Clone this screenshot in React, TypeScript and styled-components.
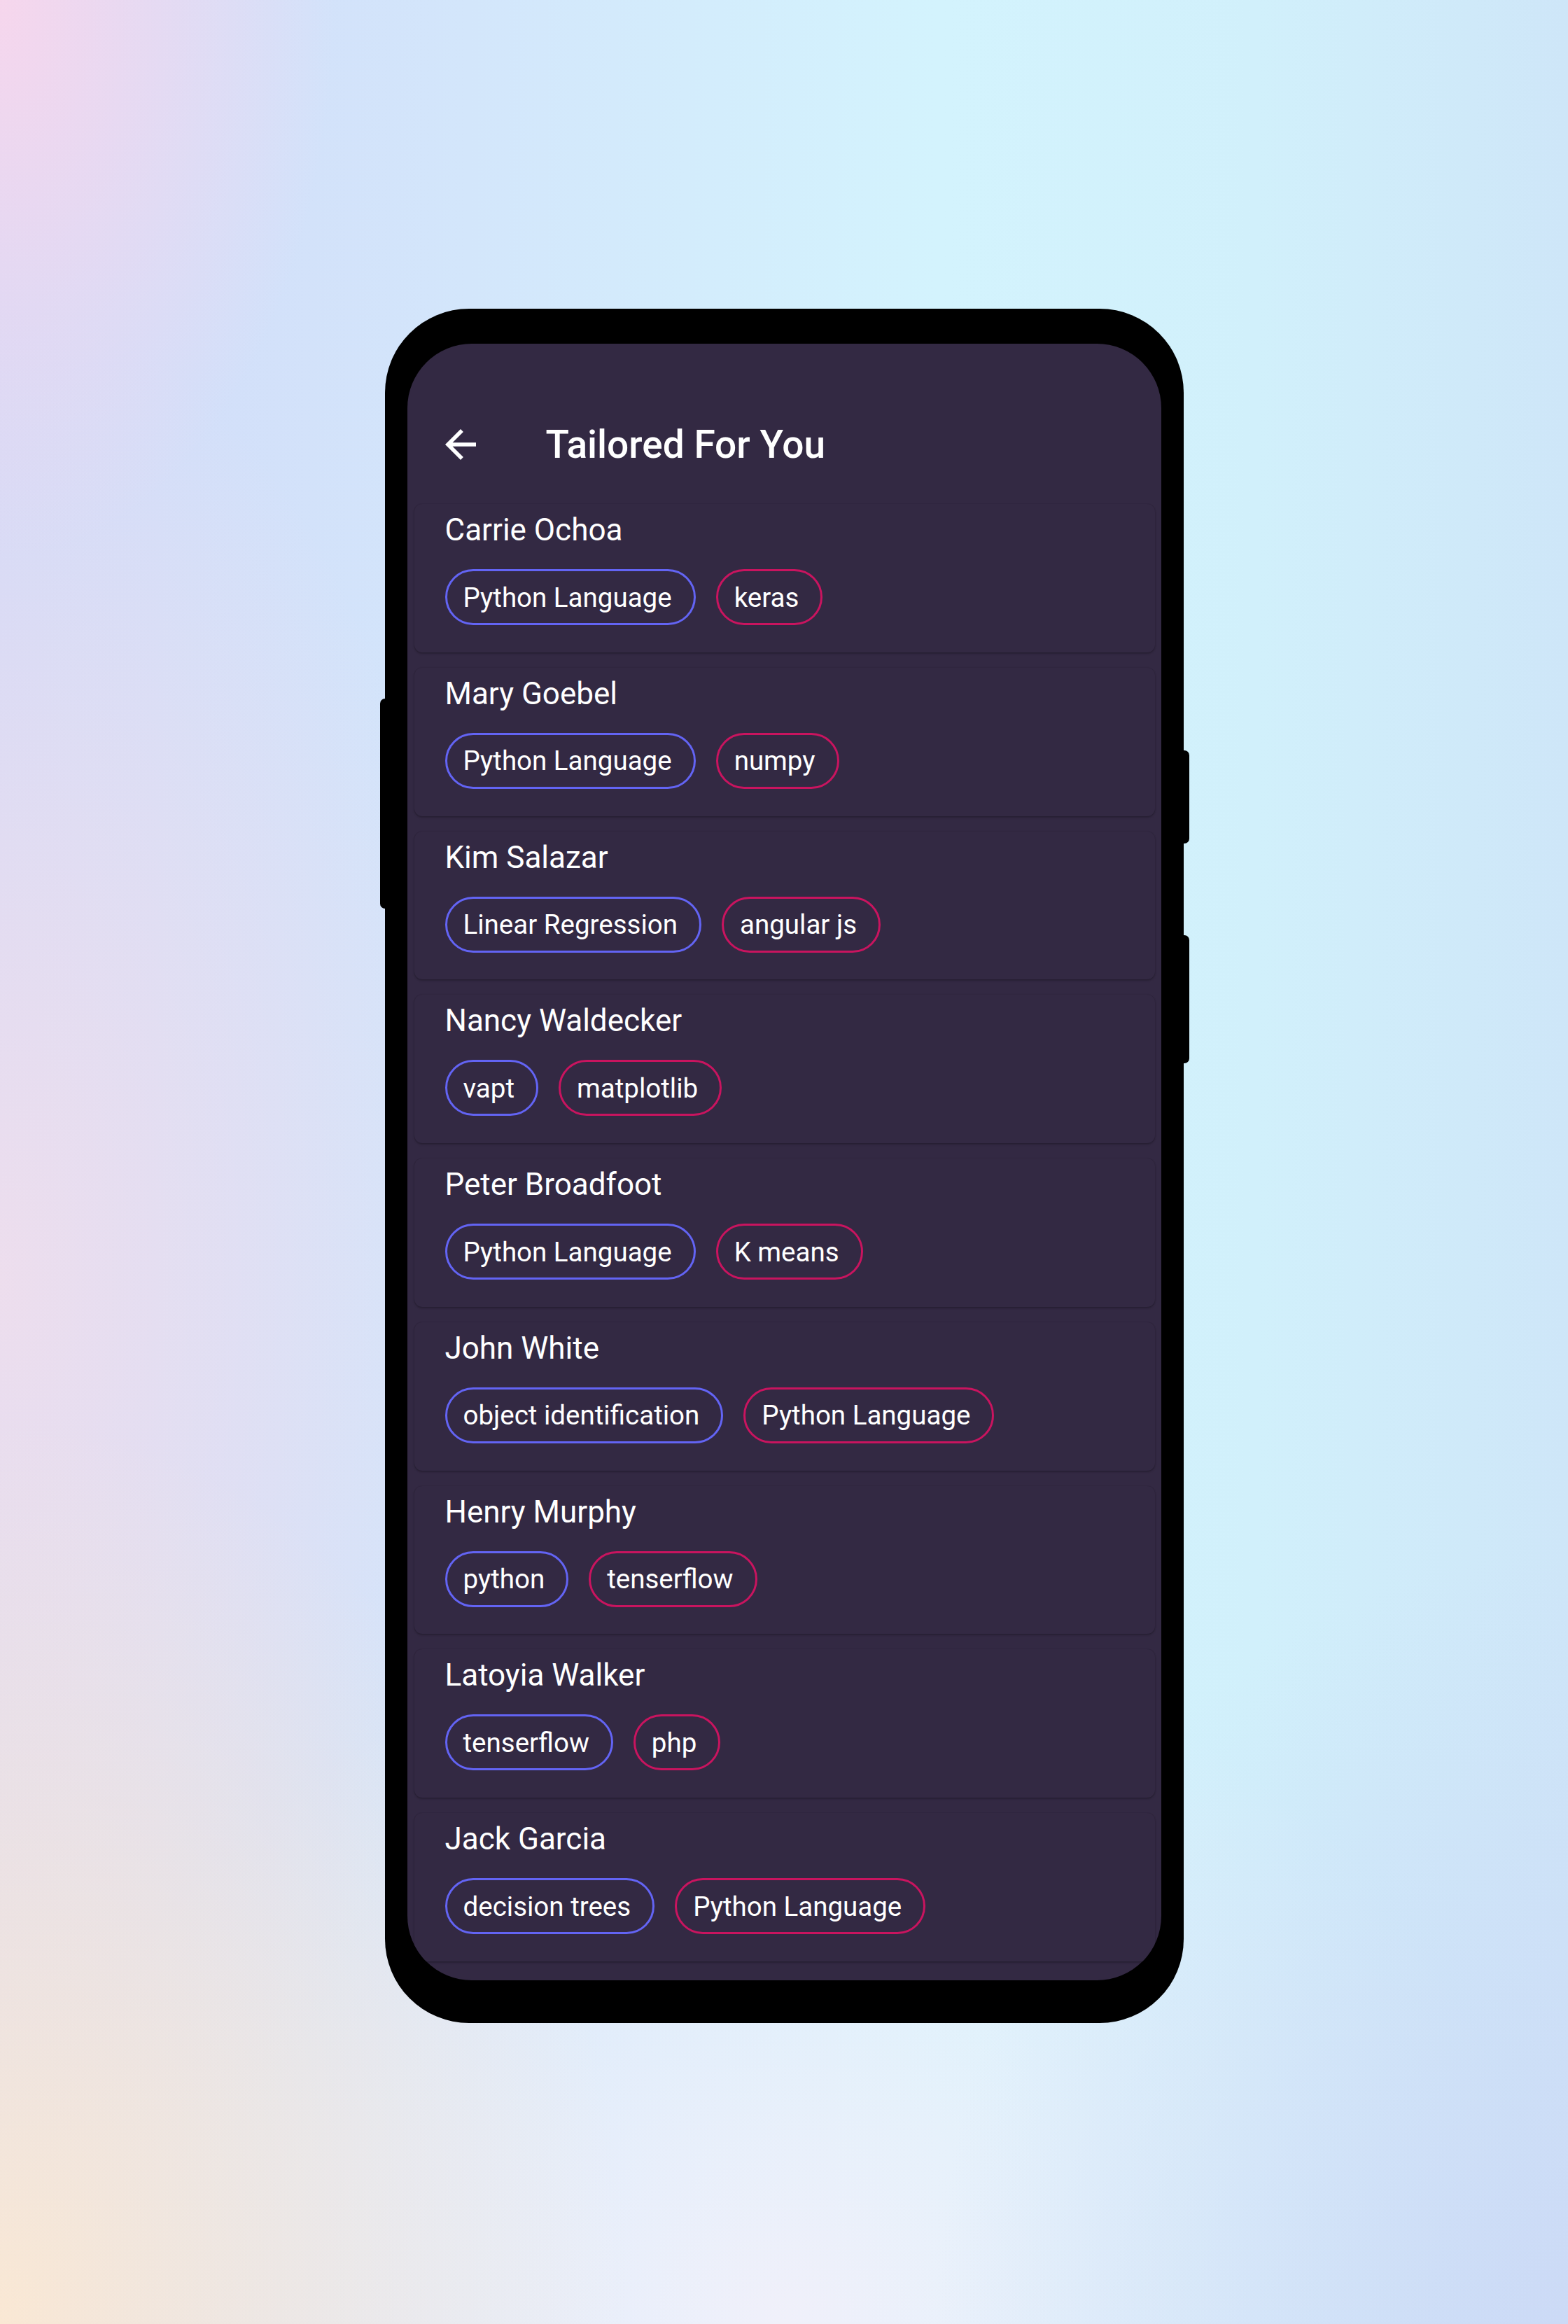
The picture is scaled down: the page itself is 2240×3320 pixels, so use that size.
import React from "react";
import styled, { createGlobalStyle } from "styled-components";

const GlobalStyle = createGlobalStyle`
  html, body {
    margin: 0;
    padding: 0;
  }
  body {
    font-family: Roboto, "Noto Sans", Arial, sans-serif;
  }
  * {
    box-sizing: border-box;
  }
`;

const Page = styled.div`
  width: 2240px;
  height: 3320px;
  display: flex;
  justify-content: center;
  align-items: flex-start;
  padding-top: 441px;
  background:
    radial-gradient(ellipse 480px 800px at 0% 0%, rgba(248, 214, 236, 0.95) 0%, rgba(248, 214, 236, 0) 100%),
    radial-gradient(ellipse 900px 1300px at 0% 100%, rgba(250, 232, 212, 1) 0%, rgba(250, 232, 212, 0) 100%),
    radial-gradient(ellipse 700px 1400px at 0% 55%, rgba(240, 222, 236, 0.9) 0%, rgba(240, 222, 236, 0) 100%),
    radial-gradient(ellipse 900px 1100px at 100% 100%, rgba(204, 218, 246, 1) 0%, rgba(204, 218, 246, 0) 100%),
    radial-gradient(ellipse 1100px 1000px at 50% 100%, rgba(240, 240, 250, 1) 0%, rgba(240, 240, 250, 0) 100%),
    linear-gradient(90deg, #d2daf8 0%, #d3e6fb 30%, #d3f3fd 60%, #d1f0fb 80%, #cee6f8 100%);
`;

const Phone = styled.div`
  position: relative;
  width: 1141px;
  height: 2449px;
  background: #000;
  border-radius: 120px;
  padding: 50px 32px 61px 32px;
`;

const SideButton = styled.div<{ $side: "left" | "right"; $top: number; $height: number }>`
  position: absolute;
  top: ${(p) => p.$top}px;
  height: ${(p) => p.$height}px;
  width: 10px;
  background: #000;
  ${(p) =>
    p.$side === "left"
      ? "left: -7px; border-radius: 7px 0 0 7px;"
      : "right: -8px; border-radius: 0 7px 7px 0;"}
`;

const Screen = styled.div`
  width: 100%;
  height: 100%;
  background: #332943;
  border-radius: 92px;
  overflow: hidden;
  display: flex;
  flex-direction: column;
`;

const StatusSpace = styled.div`
  height: 67px;
  flex: none;
`;

const Toolbar = styled.header`
  height: 154px;
  flex: none;
  display: flex;
  align-items: center;
  padding-left: 43px;
  gap: 89px;
`;

const BackButton = styled.button`
  width: 66px;
  height: 66px;
  padding: 0;
  border: none;
  background: transparent;
  color: #ffffff;
  display: flex;
  align-items: center;
  justify-content: center;
  cursor: pointer;
`;

const Title = styled.h1`
  margin: 0;
  font-family: Roboto, "Noto Sans", Arial, sans-serif;
  font-weight: 500;
  font-size: 55px;
  line-height: normal;
  color: #ffffff;
`;

const List = styled.div`
  display: flex;
  flex-direction: column;
  gap: 22px;
  padding: 8px 9px 0 10px;
`;

const Card = styled.article`
  background: #332943;
  border-radius: 11px;
  padding: 11px 44px 38.75px 44px;
  box-shadow: 0 2px 3px rgba(0, 0, 0, 0.22), 0 0 1.5px rgba(0, 0, 0, 0.22);
  display: flex;
  flex-direction: column;
  gap: 30px;
`;

const Name = styled.div`
  font-family: Roboto, "Noto Sans", Arial, sans-serif;
  font-size: 44px;
  line-height: 52px;
  color: #ffffff;
  font-weight: 400;
`;

const ChipRow = styled.div`
  display: flex;
  gap: 29px;
`;

const Chip = styled.span<{ $tone: "primary" | "secondary" }>`
  display: inline-flex;
  align-items: center;
  height: 80px;
  padding: 0 31px 0 23px;
  border: 3px solid ${(p) => (p.$tone === "primary" ? "#6364f4" : "#c9145f")};
  border-radius: 40px;
  font-family: Roboto, "Noto Sans", Arial, sans-serif;
  font-size: 38.5px;
  color: #ffffff;
  white-space: nowrap;
`;

const people: { name: string; skills: [string, string] }[] = [
  { name: "Carrie Ochoa", skills: ["Python Language", "keras"] },
  { name: "Mary Goebel", skills: ["Python Language", "numpy"] },
  { name: "Kim Salazar", skills: ["Linear Regression", "angular js"] },
  { name: "Nancy Waldecker", skills: ["vapt", "matplotlib"] },
  { name: "Peter Broadfoot", skills: ["Python Language", "K means"] },
  { name: "John White", skills: ["object identification", "Python Language"] },
  { name: "Henry Murphy", skills: ["python", "tenserflow"] },
  { name: "Latoyia Walker", skills: ["tenserflow", "php"] },
  { name: "Jack Garcia", skills: ["decision trees", "Python Language"] },
];

const ArrowBack = () => (
  <svg width="66" height="66" viewBox="0 0 24 24" fill="currentColor" aria-hidden="true">
    <path d="M20 11H7.83l5.59-5.59L12 4l-8 8 8 8 1.41-1.41L7.83 13H20v-2z" />
  </svg>
);

export default function App() {
  return (
    <>
      <GlobalStyle />
      <Page>
        <Phone>
          <SideButton $side="left" $top={557} $height={300} />
          <SideButton $side="right" $top={631} $height={133} />
          <SideButton $side="right" $top={895} $height={183} />
          <Screen>
            <StatusSpace />
            <Toolbar>
              <BackButton aria-label="Back">
                <ArrowBack />
              </BackButton>
              <Title>Tailored For You</Title>
            </Toolbar>
            <List>
              {people.map((p) => (
                <Card key={p.name}>
                  <Name>{p.name}</Name>
                  <ChipRow>
                    <Chip $tone="primary">{p.skills[0]}</Chip>
                    <Chip $tone="secondary">{p.skills[1]}</Chip>
                  </ChipRow>
                </Card>
              ))}
            </List>
          </Screen>
        </Phone>
      </Page>
    </>
  );
}
